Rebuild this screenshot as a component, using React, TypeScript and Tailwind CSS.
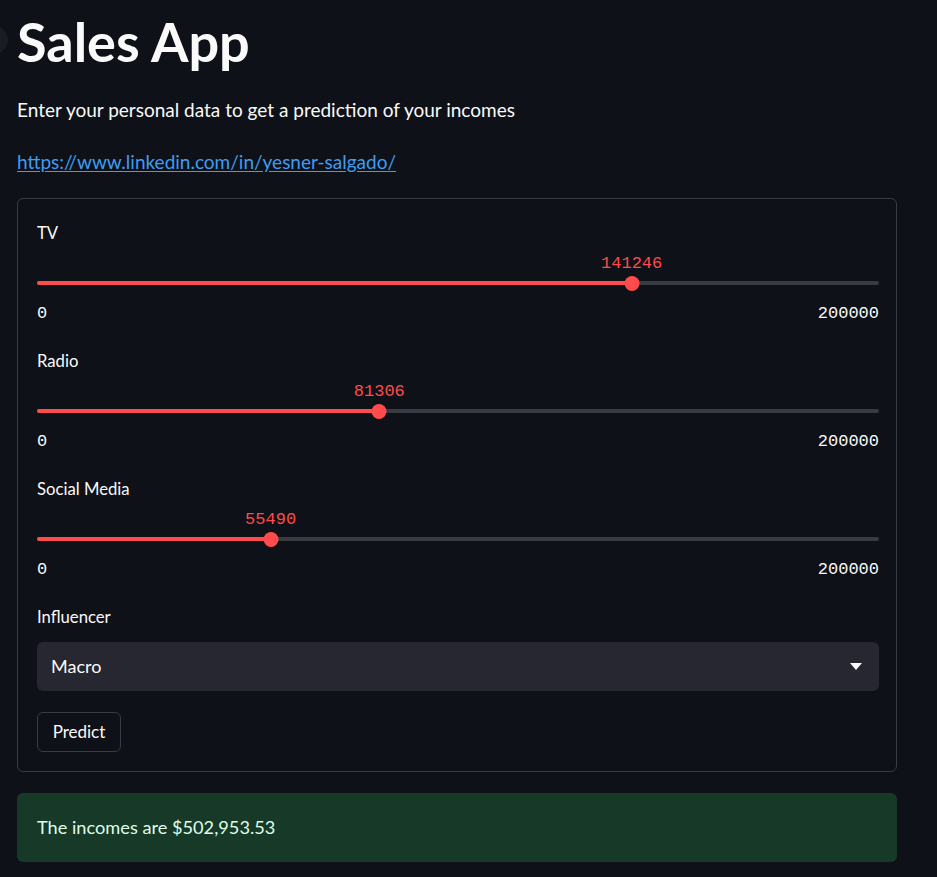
import { useState } from 'react';

type SliderDef = { label: string; value: number; min: number; max: number };

const sliders: SliderDef[] = [
  { label: 'TV', value: 141246, min: 0, max: 200000 },
  { label: 'Radio', value: 81306, min: 0, max: 200000 },
  { label: 'Social Media', value: 55490, min: 0, max: 200000 },
];

const mono = "font-['Liberation_Mono','DejaVu_Sans_Mono',monospace]";

function Slider({ label, value, min, max }: SliderDef) {
  const pct = ((value - min) / (max - min)) * 100;
  return (
    <div className="flex flex-col">
      <label className="text-[16.7px] leading-[22px] text-[#fafafa]">{label}</label>
      <div className="relative mt-[10px] h-[20px]">
        <span
          className={`absolute top-0 -translate-x-1/2 text-[17px] leading-[20px] text-[#ff4b4b] ${mono}`}
          style={{ left: `${pct}%` }}
        >
          {value}
        </span>
      </div>
      <div className="relative mt-[3px] flex h-[12px] items-center">
        <div className="h-[4px] w-full rounded-full bg-[#393a42]" />
        <div
          className="absolute left-0 h-[4px] rounded-full bg-[#ff4b4b]"
          style={{ width: `${pct}%` }}
        />
        <div
          className="absolute h-[15px] w-[15px] -translate-x-1/2 rounded-full bg-[#ff4b4b]"
          style={{ left: `${pct}%` }}
        />
      </div>
      <div className={`mt-[15px] flex justify-between text-[17px] leading-[20px] text-[#fafafa] ${mono}`}>
        <span>{min}</span>
        <span>{max}</span>
      </div>
    </div>
  );
}

export default function App() {
  const [influencer] = useState('Macro');

  return (
    <div className="relative min-h-screen overflow-hidden bg-[#0e1117] pl-[17px] font-['Source_Sans_Pro',Lato,'Noto_Sans',sans-serif] text-[#fafafa]">
      {/* header anchor bubble, mostly off screen */}
      <div className="absolute -left-[20px] top-[26px] h-[28px] w-[28px] rounded-full bg-[#191c24]" />

      <h1 className="mt-[12px] text-[54px] font-bold leading-[60px]">Sales App</h1>

      <p className="mt-[24px] text-[19px] leading-[28px]">
        Enter your personal data to get a prediction of your incomes
      </p>

      <a
        href="#"
        className="mt-[24px] block w-fit text-[19px] leading-[28px] text-[#3d9df3] underline underline-offset-2"
      >
        https://www.linkedin.com/in/yesner-salgado/
      </a>

      <div className="mt-[22px] flex w-[880px] flex-col rounded-[6px] border border-[#3b3c42] pb-[19px] pl-[19px] pr-[17px] pt-[23px]">
        <div className="flex flex-col gap-[26px]">
          {sliders.map((s) => (
            <Slider key={s.label} {...s} />
          ))}
          <div className="flex flex-col">
            <label className="text-[16.7px] leading-[22px]">Influencer</label>
            <div className="mt-[14px] flex h-[49px] items-center justify-between rounded-[6px] bg-[#262730] pl-[14px] pr-[17px]">
              <span className="text-[18px]">{influencer}</span>
              <svg width="12" height="7" viewBox="0 0 12 7">
                <path d="M0 0h12L6 7z" fill="#fafafa" />
              </svg>
            </div>
          </div>
        </div>
        <button className="mt-[21px] h-[40px] w-[84px] rounded-[6px] border border-[#3b3c42] bg-[#0e1117] text-[17px] text-[#fafafa]">
          Predict
        </button>
      </div>

      <div className="mt-[21px] flex h-[69px] w-[880px] items-center rounded-[6px] bg-[#173928] px-[20px]">
        <span className="text-[18.2px] text-[#dffde9]">The incomes are $502,953.53</span>
      </div>
    </div>
  );
}
